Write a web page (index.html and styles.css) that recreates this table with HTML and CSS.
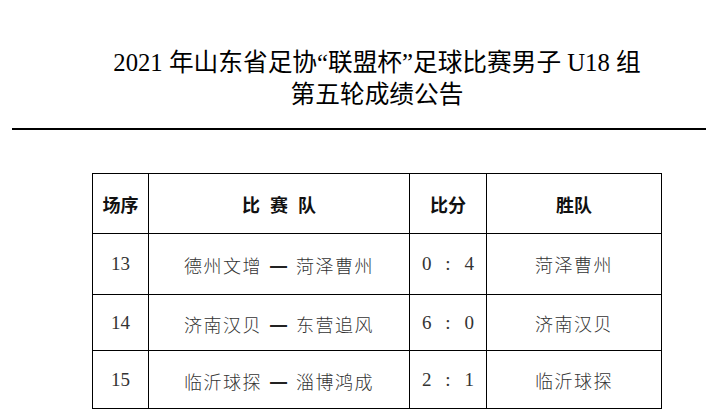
FILE: index.html
```html
<!DOCTYPE html>
<html lang="zh-CN">
<head>
<meta charset="utf-8">
<title>第五轮成绩公告</title>
<link rel="stylesheet" href="styles.css">
</head>
<body>
<div class="page">
  <header class="title">
    <div class="title-line">2021 年山东省足协“联盟杯”足球比赛男子 U18 组</div>
    <div class="title-line">第五轮成绩公告</div>
  </header>
</div>
<div class="rule"></div>
<div class="page">
  <table class="results">
    <thead>
      <tr class="head-row">
        <th class="c-no">场序</th>
        <th class="c-match"><span class="spaced">比赛</span>队</th>
        <th class="c-score">比分</th>
        <th class="c-win">胜队</th>
      </tr>
    </thead>
    <tbody>
      <tr class="row-a">
        <td class="num">13</td>
        <td class="team">德州文增<span class="dash">—</span>菏泽曹州</td>
        <td class="num score">0 : 4</td>
        <td class="team">菏泽曹州</td>
      </tr>
      <tr class="row-b">
        <td class="num">14</td>
        <td class="team">济南汉贝<span class="dash">—</span>东营追风</td>
        <td class="num score">6 : 0</td>
        <td class="team">济南汉贝</td>
      </tr>
      <tr class="row-c">
        <td class="num">15</td>
        <td class="team">临沂球探<span class="dash">—</span>淄博鸿成</td>
        <td class="num score">2 : 1</td>
        <td class="team">临沂球探</td>
      </tr>
    </tbody>
  </table>
</div>
</body>
</html>
```

FILE: styles.css
```css
html, body {
  margin: 0;
  padding: 0;
  background: #fff;
}

body {
  font-family: "Liberation Serif", "Noto Sans CJK SC", serif;
  color: #000;
}

.page {
  margin-left: 48px;
  width: 658px;
}

.title {
  padding-top: 47px;
  text-align: center;
  font-size: 24.7px;
  line-height: 32px;
  font-weight: 400;
  color: #000;
}

.rule {
  margin: 17px 0 43px 12px;
  height: 2px;
  background: #000;
}

.results {
  border-collapse: collapse;
  margin: 0 auto;
  width: 569px;
  table-layout: fixed;
}

.results th,
.results td {
  border: 1px solid #000;
  padding: 0;
  text-align: center;
  vertical-align: middle;
}

.c-no { width: 55px; }
.c-match { width: 260px; }
.c-score { width: 76px; }
.c-win { width: 174px; }

.results th {
  font-family: "Noto Sans CJK SC", sans-serif;
  font-size: 18px;
  font-weight: 700;
  color: #111;
}

.spaced {
  letter-spacing: 10px;
}

.head-row { height: 60px; }
.row-a { height: 61px; }
.row-b { height: 56px; }
.row-c { height: 58px; }

.num {
  font-family: "Liberation Serif", "Noto Sans CJK SC", serif;
  font-size: 19px;
  color: #333;
}

.score {
  word-spacing: 9px;
}

.team {
  font-family: "Noto Sans CJK SC", sans-serif;
  font-size: 18px;
  font-weight: 300;
  letter-spacing: 1.5px;
  color: #333;
}

.dash {
  display: inline-block;
  margin: 0 8px 0 7px;
  font-size: 21px;
  font-weight: 700;
  letter-spacing: 0;
  color: #222;
}
```
